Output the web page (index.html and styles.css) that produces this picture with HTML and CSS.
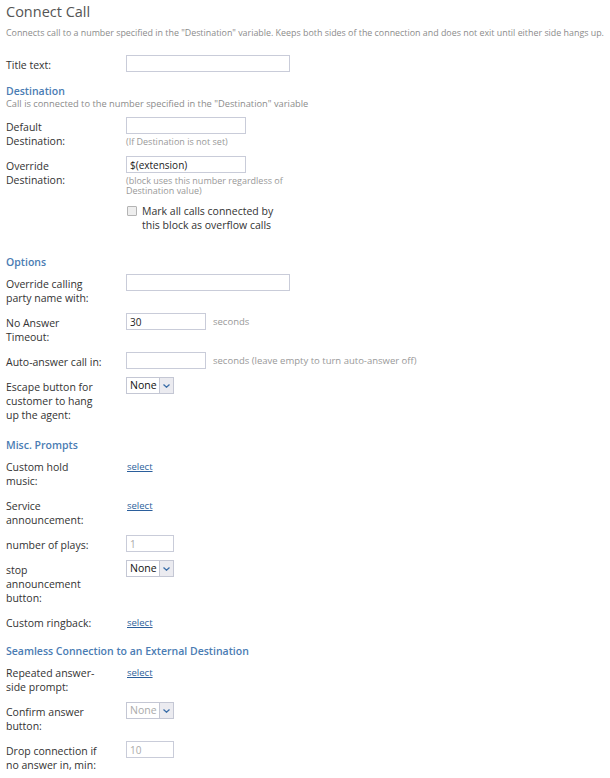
FILE: index.html
```html
<!DOCTYPE html>
<html lang="en">
<head>
  <meta charset="UTF-8">
  <title>Connect Call</title>
  <link rel="stylesheet" href="styles.css">
</head>
<body>
  <div class="page">
    <h1 class="title">Connect Call</h1>
    <p class="desc">Connects call to a number specified in the "Destination" variable. Keeps both sides of the connection and does not exit until either side hangs up.</p>

    <div class="row">
      <label class="lbl">Title text:</label>
      <div class="ctl"><input class="inp w-lg" type="text"></div>
    </div>

    <h3 class="sect sect-first">Destination</h3>
    <p class="sect-note">Call is connected to the number specified in the "Destination" variable</p>

    <div class="row">
      <label class="lbl">Default Destination:</label>
      <div class="ctl">
        <input class="inp w-md" type="text">
        <div class="hint">(If Destination is not set)</div>
      </div>
    </div>

    <div class="row">
      <label class="lbl">Override Destination:</label>
      <div class="ctl">
        <input class="inp w-md" type="text" value="$(extension)">
        <div class="hint">(block uses this number regardless of Destination value)</div>
      </div>
    </div>

    <div class="row row-check">
      <span class="lbl"></span>
      <label class="check">
        <input type="checkbox" class="cbox">
        <span class="check-text">Mark all calls connected by this block as overflow calls</span>
      </label>
    </div>

    <h3 class="sect">Options</h3>

    <div class="row">
      <label class="lbl">Override calling party name with:</label>
      <div class="ctl"><input class="inp w-lg" type="text"></div>
    </div>

    <div class="row">
      <label class="lbl">No Answer Timeout:</label>
      <div class="ctl ctl-inline">
        <input class="inp w-sm" type="text" value="30">
        <span class="unit">seconds</span>
      </div>
    </div>

    <div class="row">
      <label class="lbl lbl-one">Auto-answer call in:</label>
      <div class="ctl ctl-inline">
        <input class="inp w-sm" type="text">
        <span class="unit">seconds (leave empty to turn auto-answer off)</span>
      </div>
    </div>

    <div class="row">
      <label class="lbl">Escape button for customer to hang up the agent:</label>
      <div class="ctl">
        <span class="dd"><span class="dd-val">None</span><span class="dd-btn"><svg width="7" height="4" viewBox="0 0 7 4"><path d="M0.5 0.5 L3.5 3.2 L6.5 0.5" fill="none" stroke="#3b6ea8" stroke-width="1.3"/></svg></span></span>
      </div>
    </div>

    <h3 class="sect">Misc. Prompts</h3>

    <div class="row">
      <label class="lbl">Custom hold music:</label>
      <div class="ctl"><a class="pick" href="#">select</a></div>
    </div>

    <div class="row">
      <label class="lbl">Service announcement:</label>
      <div class="ctl"><a class="pick" href="#">select</a></div>
    </div>

    <div class="row">
      <label class="lbl">number of plays:</label>
      <div class="ctl"><input class="inp w-xs" type="text" value="1" disabled></div>
    </div>

    <div class="row">
      <label class="lbl">stop announcement button:</label>
      <div class="ctl">
        <span class="dd"><span class="dd-val">None</span><span class="dd-btn"><svg width="7" height="4" viewBox="0 0 7 4"><path d="M0.5 0.5 L3.5 3.2 L6.5 0.5" fill="none" stroke="#3b6ea8" stroke-width="1.3"/></svg></span></span>
      </div>
    </div>

    <div class="row">
      <label class="lbl">Custom ringback:</label>
      <div class="ctl"><a class="pick" href="#">select</a></div>
    </div>

    <h3 class="sect sect-tight">Seamless Connection to an External Destination</h3>

    <div class="row">
      <label class="lbl">Repeated answer-side prompt:</label>
      <div class="ctl"><a class="pick" href="#">select</a></div>
    </div>

    <div class="row">
      <label class="lbl">Confirm answer button:</label>
      <div class="ctl">
        <span class="dd dd-off"><span class="dd-val">None</span><span class="dd-btn"><svg width="7" height="4" viewBox="0 0 7 4"><path d="M0.5 0.5 L3.5 3.2 L6.5 0.5" fill="none" stroke="#3b6ea8" stroke-width="1.3"/></svg></span></span>
      </div>
    </div>

    <div class="row">
      <label class="lbl">Drop connection if no answer in, min:</label>
      <div class="ctl"><input class="inp w-xs" type="text" value="10" disabled></div>
    </div>
  </div>
</body>
</html>
```

FILE: styles.css
```css
/* Page */
body {
  margin: 0;
  font-family: 'Open Sans', 'Liberation Sans', sans-serif;
  color: #333;
  background: #fff;
}

.page {
  padding: 3px 6px 0;
}

.title {
  margin: 0;
  font-size: 14.5px;
  line-height: 18px;
  font-weight: 400;
  color: #555;
}

.desc {
  margin: 6px 0 16px;
  font-size: 8.9px;
  line-height: 12px;
  color: #8c8c8c;
  white-space: nowrap;
}

/* Section headings */
.sect {
  margin: 17px 0 6px;
  font-size: 10.5px;
  line-height: 12px;
  font-weight: 600;
  color: #4a7cb3;
}

.sect-first {
  margin-top: 13px;
  margin-bottom: 1px;
}

.sect-tight {
  margin-top: 15px;
}

.sect-note {
  margin: 0 0 7px;
  font-size: 9.3px;
  line-height: 12px;
  color: #8c8c8c;
}

/* Form rows */
.row {
  display: flex;
  align-items: flex-start;
  margin-bottom: 8px;
}

.row-check {
  margin-bottom: 24px;
}

.lbl {
  flex: 0 0 92px;
  min-width: 0;
  margin-right: 28px;
  padding-top: 3px;
  font-size: 10.5px;
  line-height: 14px;
  color: #333;
}

.lbl-one {
  white-space: nowrap;
}

.ctl {
  display: flex;
  flex-direction: column;
  align-items: flex-start;
}

.ctl-inline {
  flex-direction: row;
  align-items: center;
}

/* Inputs */
.inp {
  display: block;
  box-sizing: border-box;
  height: 17px;
  margin: 0;
  padding: 0 3px;
  border: 1px solid #c9ccd9;
  border-radius: 0;
  background: #fff;
  font-family: inherit;
  font-size: 10px;
  color: #222;
  outline: none;
}

.inp:disabled {
  color: #aaa;
  background: #fff;
}

.w-lg { width: 164px; }
.w-md { width: 120px; }
.w-sm { width: 80px; }
.w-xs { width: 48px; }

.unit {
  margin-left: 7px;
  font-size: 9.5px;
  color: #999;
}

.hint {
  max-width: 170px;
  margin-top: 3px;
  font-size: 9px;
  line-height: 10px;
  color: #999;
}

/* Dropdowns */
.dd {
  display: flex;
  box-sizing: border-box;
  width: 48px;
  height: 17px;
  border: 1px solid #c4c7d4;
  background: #fff;
}

.dd-val {
  flex: 1;
  padding-left: 3px;
  font-size: 10.5px;
  line-height: 15px;
  color: #111;
}

.dd-btn {
  display: flex;
  align-items: center;
  justify-content: center;
  width: 13px;
  border-left: 1px solid #c4c7d4;
  background: #ebebf0;
}

.dd-off .dd-val {
  color: #aaa;
}

/* Checkbox */
.check {
  display: flex;
  align-items: flex-start;
}

.cbox {
  appearance: none;
  box-sizing: border-box;
  width: 10px;
  height: 10px;
  margin: 2px 5px 0 1px;
  border: 1px solid #b4b4b4;
  border-radius: 1px;
  background: #eee;
}

.check-text {
  width: 140px;
  font-size: 10.5px;
  line-height: 14px;
  color: #333;
}

/* Links */
.pick {
  margin-left: 1px;
  padding-top: 3px;
  font-size: 9.5px;
  line-height: 14px;
  color: #2b5f9c;
  text-decoration: underline;
}
```
